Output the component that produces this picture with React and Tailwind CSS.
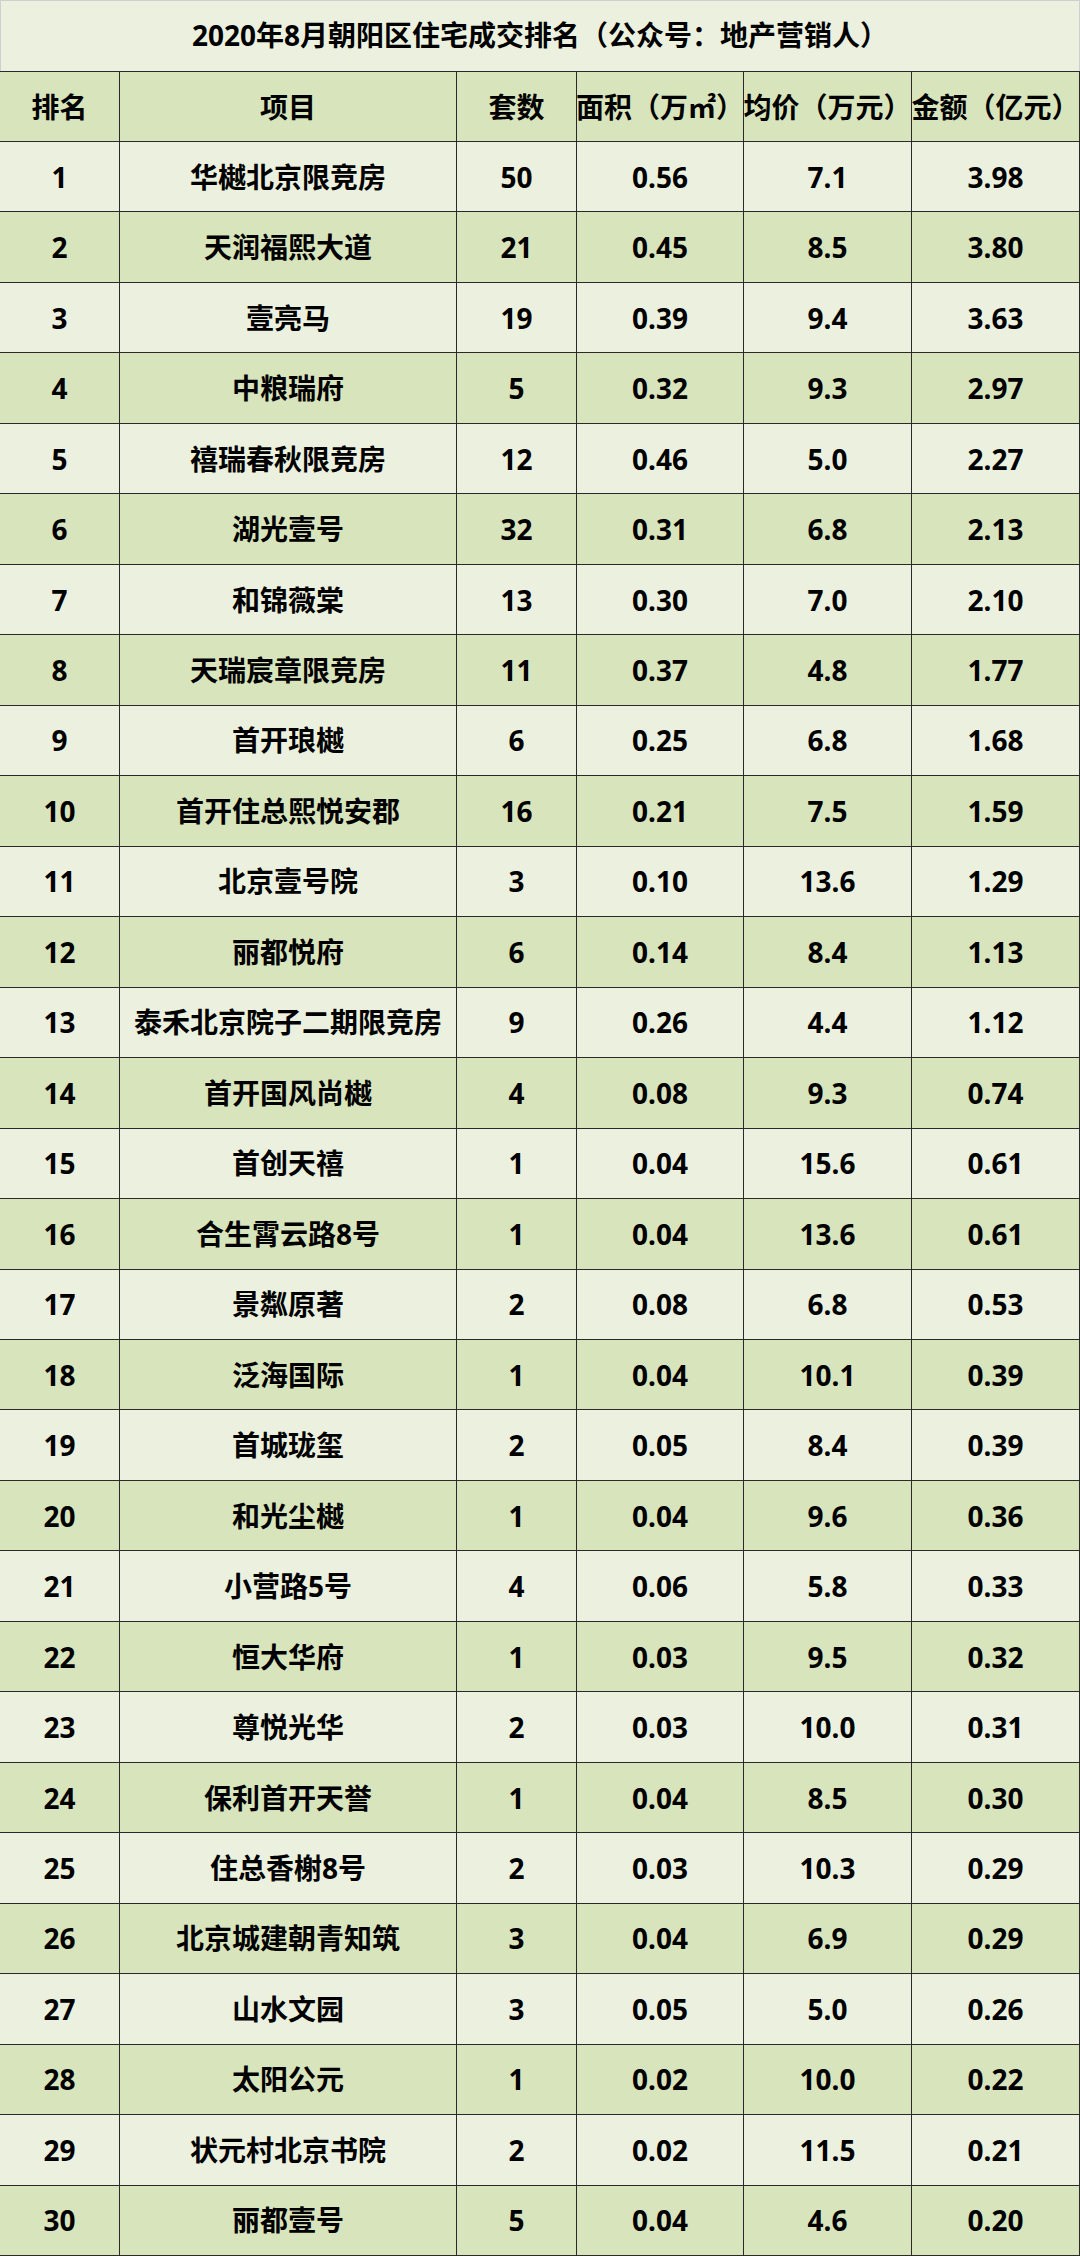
const ROWS = [
  [1, '华樾北京限竞房', '50', '0.56', '7.1', '3.98'],
  [2, '天润福熙大道', '21', '0.45', '8.5', '3.80'],
  [3, '壹亮马', '19', '0.39', '9.4', '3.63'],
  [4, '中粮瑞府', '5', '0.32', '9.3', '2.97'],
  [5, '禧瑞春秋限竞房', '12', '0.46', '5.0', '2.27'],
  [6, '湖光壹号', '32', '0.31', '6.8', '2.13'],
  [7, '和锦薇棠', '13', '0.30', '7.0', '2.10'],
  [8, '天瑞宸章限竞房', '11', '0.37', '4.8', '1.77'],
  [9, '首开琅樾', '6', '0.25', '6.8', '1.68'],
  [10, '首开住总熙悦安郡', '16', '0.21', '7.5', '1.59'],
  [11, '北京壹号院', '3', '0.10', '13.6', '1.29'],
  [12, '丽都悦府', '6', '0.14', '8.4', '1.13'],
  [13, '泰禾北京院子二期限竞房', '9', '0.26', '4.4', '1.12'],
  [14, '首开国风尚樾', '4', '0.08', '9.3', '0.74'],
  [15, '首创天禧', '1', '0.04', '15.6', '0.61'],
  [16, '合生霄云路8号', '1', '0.04', '13.6', '0.61'],
  [17, '景粼原著', '2', '0.08', '6.8', '0.53'],
  [18, '泛海国际', '1', '0.04', '10.1', '0.39'],
  [19, '首城珑玺', '2', '0.05', '8.4', '0.39'],
  [20, '和光尘樾', '1', '0.04', '9.6', '0.36'],
  [21, '小营路5号', '4', '0.06', '5.8', '0.33'],
  [22, '恒大华府', '1', '0.03', '9.5', '0.32'],
  [23, '尊悦光华', '2', '0.03', '10.0', '0.31'],
  [24, '保利首开天誉', '1', '0.04', '8.5', '0.30'],
  [25, '住总香榭8号', '2', '0.03', '10.3', '0.29'],
  [26, '北京城建朝青知筑', '3', '0.04', '6.9', '0.29'],
  [27, '山水文园', '3', '0.05', '5.0', '0.26'],
  [28, '太阳公元', '1', '0.02', '10.0', '0.22'],
  [29, '状元村北京书院', '2', '0.02', '11.5', '0.21'],
  [30, '丽都壹号', '5', '0.04', '4.6', '0.20'],
];

const HEADERS = ['排名', '项目', '套数', '面积（万㎡）', '均价（万元）', '金额（亿元）'];

const GRID = 'grid grid-cols-[120px_337px_120px_167px_168px_168px]';

function Cell({ children }) {
  return (
    <div className="flex items-center justify-center border-r border-[#2a2a2a] whitespace-nowrap overflow-visible">
      {children}
    </div>
  );
}

export default function App() {
  return (
    <div
      className="w-[1080px] h-[2256px] flex flex-col bg-[#ebf1de] text-black font-bold text-[28px] leading-none"
      style={{ fontFamily: '"Noto Sans", "Noto Sans CJK SC", sans-serif' }}
    >
      {/* Title */}
      <div className="h-[71px] shrink-0 flex items-center justify-center bg-[#ebf1de] border-t border-l border-r border-[#cfcfcf] border-b-[#2a2a2a]">
        <span className="pb-[2px]">2020年8月朝阳区住宅成交排名（公众号：地产营销人）</span>
      </div>

      {/* Header */}
      <div className={`${GRID} h-[71px] shrink-0 bg-[#d8e4bc] border-t border-b border-[#2a2a2a]`}>
        {HEADERS.map(h => (
          <Cell key={h}>{h}</Cell>
        ))}
      </div>

      {/* Rows */}
      {ROWS.map(([rank, name, units, area, price, amount]) => (
        <div
          key={rank}
          className={`${GRID} flex-1 min-h-0 border-b border-[#2a2a2a] ${rank % 2 === 1 ? 'bg-[#ebf1de]' : 'bg-[#d8e4bc]'}`}
        >
          <Cell>{rank}</Cell>
          <Cell>{name}</Cell>
          <Cell>{units}</Cell>
          <Cell>{area}</Cell>
          <Cell>{price}</Cell>
          <Cell>{amount}</Cell>
        </div>
      ))}
    </div>
  );
}
